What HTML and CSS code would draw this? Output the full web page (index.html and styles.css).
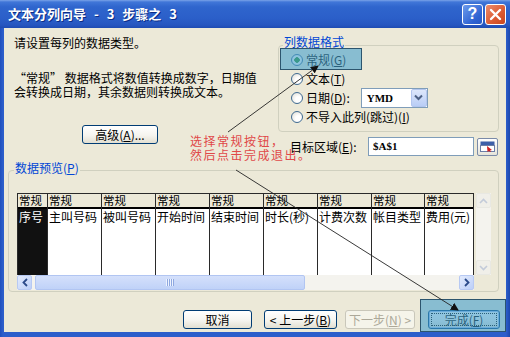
FILE: index.html
```html
<!DOCTYPE html>
<html lang="zh-CN">
<head>
    <meta charset="UTF-8">
    <title>文本分列向导 - 3 步骤之 3</title>
    <link rel="stylesheet" href="styles.css">
</head>
<body>
<div class="window">
    <div class="titlebar">
        <span class="title">文本分列向导 - 3 步骤之 3</span>
        <span class="cap-btn help">?</span>
        <span class="cap-btn close">
            <svg width="13" height="13" viewBox="0 0 13 13"><path d="M2 2 L11 11 M11 2 L2 11" stroke="#fff" stroke-width="2.4" stroke-linecap="round"/></svg>
        </span>
    </div>

    <div class="client">
        <div class="top">
            <div class="intro">
                <p class="line1">请设置每列的数据类型。</p>
                <p class="desc">“常规” 数据格式将数值转换成数字，日期值<br>会转换成日期，其余数据则转换成文本。</p>
                <button class="btn adv">高级(<u>A</u>)...</button>
            </div>
            <div class="side">
                <fieldset class="group format">
                    <legend>列数据格式</legend>
                    <div class="opts">
                        <div class="opt"><span class="radio on"></span>常规(<u>G</u>)</div>
                        <div class="opt"><span class="radio"></span>文本(<u>T</u>)</div>
                        <div class="opt"><span class="radio"></span>日期(<u>D</u>):
                            <span class="combo">YMD<span class="drop"><svg width="9" height="7" viewBox="0 0 9 7"><path d="M1 1.5 L4.5 5 L8 1.5" fill="none" stroke="#4d6185" stroke-width="2"/></svg></span></span>
                        </div>
                        <div class="opt"><span class="radio"></span>不导入此列(跳过)(<u>I</u>)</div>
                    </div>
                </fieldset>
                <div class="dest">
                    <span class="dest-label">目标区域(<u>E</u>):</span>
                    <span class="field">$A$1</span>
                    <span class="pick">
                        <svg width="15" height="11" viewBox="0 0 15 11"><rect x="0.5" y="0.5" width="14" height="4" fill="#3d5fa8"/><rect x="0.5" y="4.5" width="14" height="6" fill="#fff" stroke="#6b7da6"/><path d="M7 5 L12 9 L10 9.5 L11 11 L10 11 L9 10 L7.5 11 Z" fill="#d02020"/></svg>
                    </span>
                </div>
            </div>
        </div>

        <fieldset class="group preview">
            <legend>数据预览(<u>P</u>)</legend>
            <div class="pv-grid">
                <div class="cols">
                    <div class="col sel"><div class="hd">常规</div><div class="bd">序号</div></div>
                    <div class="col"><div class="hd">常规</div><div class="bd">主叫号码</div></div>
                    <div class="col"><div class="hd">常规</div><div class="bd">被叫号码</div></div>
                    <div class="col"><div class="hd">常规</div><div class="bd">开始时间</div></div>
                    <div class="col"><div class="hd">常规</div><div class="bd">结束时间</div></div>
                    <div class="col"><div class="hd">常规</div><div class="bd">时长(秒)</div></div>
                    <div class="col"><div class="hd">常规</div><div class="bd">计费次数</div></div>
                    <div class="col w53"><div class="hd">常规</div><div class="bd">帐目类型</div></div>
                    <div class="col last"><div class="hd">常规</div><div class="bd">费用(元)</div></div>
                </div>
                <div class="vscroll">
                    <span class="sb-btn dim"><svg width="9" height="6" viewBox="0 0 9 6"><path d="M1 5 L4.5 1.5 L8 5" fill="none" stroke="#c3cbd9" stroke-width="1.6"/></svg></span>
                    <span class="sb-track"></span>
                    <span class="sb-btn dim"><svg width="9" height="6" viewBox="0 0 9 6"><path d="M1 1 L4.5 4.5 L8 1" fill="none" stroke="#c3cbd9" stroke-width="1.6"/></svg></span>
                </div>
                <div class="hscroll">
                    <span class="sb-btn"><svg width="6" height="9" viewBox="0 0 6 9"><path d="M5 1 L1.5 4.5 L5 8" fill="none" stroke="#2b4a8a" stroke-width="1.8"/></svg></span>
                    <span class="thumb"><span class="grip"></span></span>
                    <span class="sb-track"></span>
                    <span class="sb-btn"><svg width="6" height="9" viewBox="0 0 6 9"><path d="M1 1 L4.5 4.5 L1 8" fill="none" stroke="#2b4a8a" stroke-width="1.8"/></svg></span>
                </div>
            </div>
        </fieldset>

        <div class="footer">
            <button class="btn cancel">取消</button>
            <button class="btn back">&lt; 上一步(<u>B</u>)</button>
            <button class="btn next" disabled>下一步(<u>N</u>) &gt;</button>
            <button class="btn finish"><span class="focus">完成(<u>F</u>)</span></button>
        </div>
    </div>

    <!-- 教程标注 -->
    <div class="annot">
        <div class="hl hl-normal"></div>
        <div class="hl hl-finish"></div>
        <div class="note">选择常规按钮，<br>然后点击完成退出。</div>
        <svg class="arrows" width="510" height="337" viewBox="0 0 510 337">
            <defs>
                <marker id="head" markerWidth="8" markerHeight="8" refX="7" refY="4" orient="auto" markerUnits="userSpaceOnUse">
                    <path d="M0 0 L8 4 L0 8 Z" fill="#111"/>
                </marker>
            </defs>
            <line x1="228" y1="132" x2="318" y2="66" stroke="#222" stroke-width="0.9" marker-end="url(#head)"/>
            <line x1="236" y1="170" x2="458" y2="310" stroke="#222" stroke-width="0.9" marker-end="url(#head)"/>
        </svg>
    </div>
</div>
</body>
</html>
```

FILE: styles.css
```css
* {
    box-sizing: border-box;
}
html, body {
    margin: 0;
}
body {
    width: 510px;
    height: 337px;
    overflow: hidden;
    font-family: "Noto Sans CJK SC", "Liberation Sans", sans-serif;
    font-size: 12px;
    color: #000;
}
u {
    text-decoration: underline;
}

.window {
    position: relative;
    width: 510px;
    height: 337px;
    display: flex;
    flex-direction: column;
    background: linear-gradient(to right, #1f4fbd, #2c5ecb 3px, #2c5ecb 506px, #1c47ad);
}

/* title bar */
.titlebar {
    height: 28px;
    flex: none;
    display: flex;
    align-items: center;
    padding: 0 4px 0 8px;
    background: linear-gradient(to bottom, #7aa3e8 0, #4076d8 2px, #2f65cd 7px, #2b5fc9 18px, #2656c0 25px, #1e4bb2 28px);
}
.title {
    flex: 1;
    color: #fff;
    font-weight: bold;
    font-size: 13px;
    line-height: 16px;
    word-spacing: 5px;
    text-shadow: 1px 1px 0 #0c2d86;
}
.cap-btn {
    width: 21px;
    height: 21px;
    margin-left: 2px;
    border: 1px solid #fff;
    border-radius: 3px;
    display: flex;
    align-items: center;
    justify-content: center;
}
.help {
    background: linear-gradient(135deg, #6d9cec, #2e62d2 70%, #2858c4);
    color: #fff;
    font: bold 16px/1 "Liberation Sans", sans-serif;
}
.close {
    background: linear-gradient(135deg, #ec8c6c, #db5a32 60%, #c9461f);
}

/* dialog client */
.client {
    flex: 1;
    margin: 0 4px 5px;
    background: #ece9d8;
    display: flex;
    flex-direction: column;
    padding-top: 7px;
}
.top {
    display: flex;
}
.intro {
    width: 264px;
    margin-left: 10px;
}
.line1 {
    margin: 1px 0 0;
    line-height: 14px;
}
.desc {
    margin: 21px 0 0;
    line-height: 14px;
}

.btn {
    display: block;
    height: 19px;
    padding: 0;
    border: 1px solid #003c74;
    border-radius: 3px;
    background: linear-gradient(#ffffff, #f5f4ef 55%, #e2dfd1);
    font-family: "Noto Sans CJK SC", sans-serif;
    font-size: 12px;
    line-height: 16px;
    color: #000;
    text-align: center;
}
.adv {
    width: 76px;
    margin: 26px 0 0 68px;
}

.side {
    width: 221px;
}
.group {
    margin: 0;
    min-width: 0;
    border: 1px solid #d0d0bf;
    border-radius: 4px;
}
.group legend {
    padding: 0 1px 6px;
    line-height: 14px;
    color: #0046d5;
}
.format {
    padding: 0 0 5px 4px;
}
.opts {
    margin-top: -5px;
    padding-left: 8px;
}
.opt {
    display: flex;
    align-items: center;
    height: 19px;
    line-height: 14px;
}
.radio {
    width: 12px;
    height: 12px;
    margin-right: 3px;
    border: 1px solid #3e6a92;
    border-radius: 50%;
    background: radial-gradient(circle at 65% 65%, #ffffff 30%, #dcdad0);
}
.radio.on {
    background: radial-gradient(circle, #2a8e2a 0 2.5px, #ffffff 3px, #e6e4da);
}
.combo {
    width: 67px;
    height: 20px;
    margin-left: 11px;
    padding-left: 5px;
    display: flex;
    align-items: center;
    justify-content: space-between;
    border: 1px solid #7f9db9;
    background: #fff;
    font: bold 11px "Liberation Serif", serif;
}
.drop {
    width: 16px;
    height: 18px;
    display: flex;
    align-items: center;
    justify-content: center;
    border: 1px solid #b3c6ef;
    border-radius: 2px;
    background: linear-gradient(#dde7fb, #b9cdf6);
}

.dest {
    margin-top: 5px;
    height: 19px;
    display: flex;
    align-items: center;
}
.dest-label {
    width: 78px;
    margin-left: 12px;
}
.field {
    width: 106px;
    height: 19px;
    padding-left: 4px;
    border: 1px solid #7f9db9;
    background: #fff;
    font: bold 11px/17px "Liberation Serif", serif;
}
.pick {
    width: 21px;
    height: 18px;
    margin-left: 3px;
    display: flex;
    align-items: center;
    justify-content: center;
    border: 1px solid #7a8aa8;
    border-radius: 2px;
    background: linear-gradient(#ffffff, #e6e4da);
}

/* preview */
.preview {
    width: 491px;
    margin: 5px 0 0 4px;
    padding: 14px 0 1px 5px;
}
.group.preview legend {
    padding-bottom: 4px;
}
.pv-grid {
    margin-left: 3px;
    display: grid;
    grid-template-columns: 457px 15px;
    grid-template-rows: 82px 15px;
    column-gap: 2px;
}
.cols {
    display: flex;
    border-top: 1px solid #2a2a2a;
    background: #fff;
}
.col {
    width: 54px;
    flex: none;
    display: flex;
    flex-direction: column;
    border-left: 1px solid #2a2a2a;
    white-space: nowrap;
}
.col.sel {
    width: 30px;
}
.col.w53 {
    width: 53px;
}
.col.last {
    width: 50px;
    border-right: 1px solid #2a2a2a;
}
.hd {
    height: 15px;
    padding-left: 1px;
    font-size: 11.5px;
    line-height: 13px;
    background: #ece9d8;
    border-bottom: 2px solid #000;
}
.bd {
    flex: 1;
    padding-left: 1px;
    line-height: 15px;
}
.col.sel .bd {
    background: #111;
    color: #fff;
}

.vscroll {
    display: flex;
    flex-direction: column;
    background: #f4f3ee;
}
.hscroll {
    display: flex;
    background: #f4f3ee;
}
.sb-track {
    flex: 1;
}
.sb-btn {
    width: 15px;
    height: 15px;
    flex: none;
    display: flex;
    align-items: center;
    justify-content: center;
    border: 1px solid #b7c9f3;
    border-radius: 2px;
    background: linear-gradient(135deg, #e3ebfd, #bccff8);
}
.sb-btn.dim {
    border-color: #e8e8e2;
    background: #f0efe9;
}
.thumb {
    width: 270px;
    margin-left: 3px;
    display: flex;
    align-items: center;
    justify-content: center;
    border: 1px solid #b1c5f2;
    border-radius: 2px;
    background: linear-gradient(#d4e0fb, #c0d2f8);
}
.grip {
    width: 8px;
    height: 7px;
    background: repeating-linear-gradient(to right, #eef3fe 0 1px, #8ea8e0 1px 2px);
}

/* buttons */
.footer {
    margin-top: 18px;
    padding-right: 6px;
    display: flex;
    justify-content: flex-end;
}
.cancel {
    width: 69px;
    margin-right: 12px;
}
.back {
    width: 73px;
    margin-right: 8px;
}
.next {
    width: 70px;
    margin-right: 13px;
    border-color: #c9c7ba;
    background: #f5f4ea;
    color: #aca899;
}
.finish {
    width: 72px;
    padding: 2px;
    border-color: #003c74;
    box-shadow: inset 0 0 0 1px #9fbcf0;
}
.focus {
    display: block;
    height: 13px;
    line-height: 12px;
    border: 1px dotted #000;
}

/* annotations drawn over the dialog */
.annot {
    position: absolute;
    inset: 0;
    pointer-events: none;
}
.hl {
    position: absolute;
    border: 1px solid #2c556e;
    background: rgba(70, 160, 205, 0.6);
}
.hl-normal {
    left: 280px;
    top: 48px;
    width: 82px;
    height: 22px;
}
.hl-finish {
    left: 420px;
    top: 299px;
    width: 86px;
    height: 33px;
}
.note {
    position: absolute;
    left: 190px;
    top: 134px;
    color: #e04848;
    font-size: 12px;
    line-height: 14px;
    letter-spacing: 1.5px;
}
.arrows {
    position: absolute;
    left: 0;
    top: 0;
}
```
